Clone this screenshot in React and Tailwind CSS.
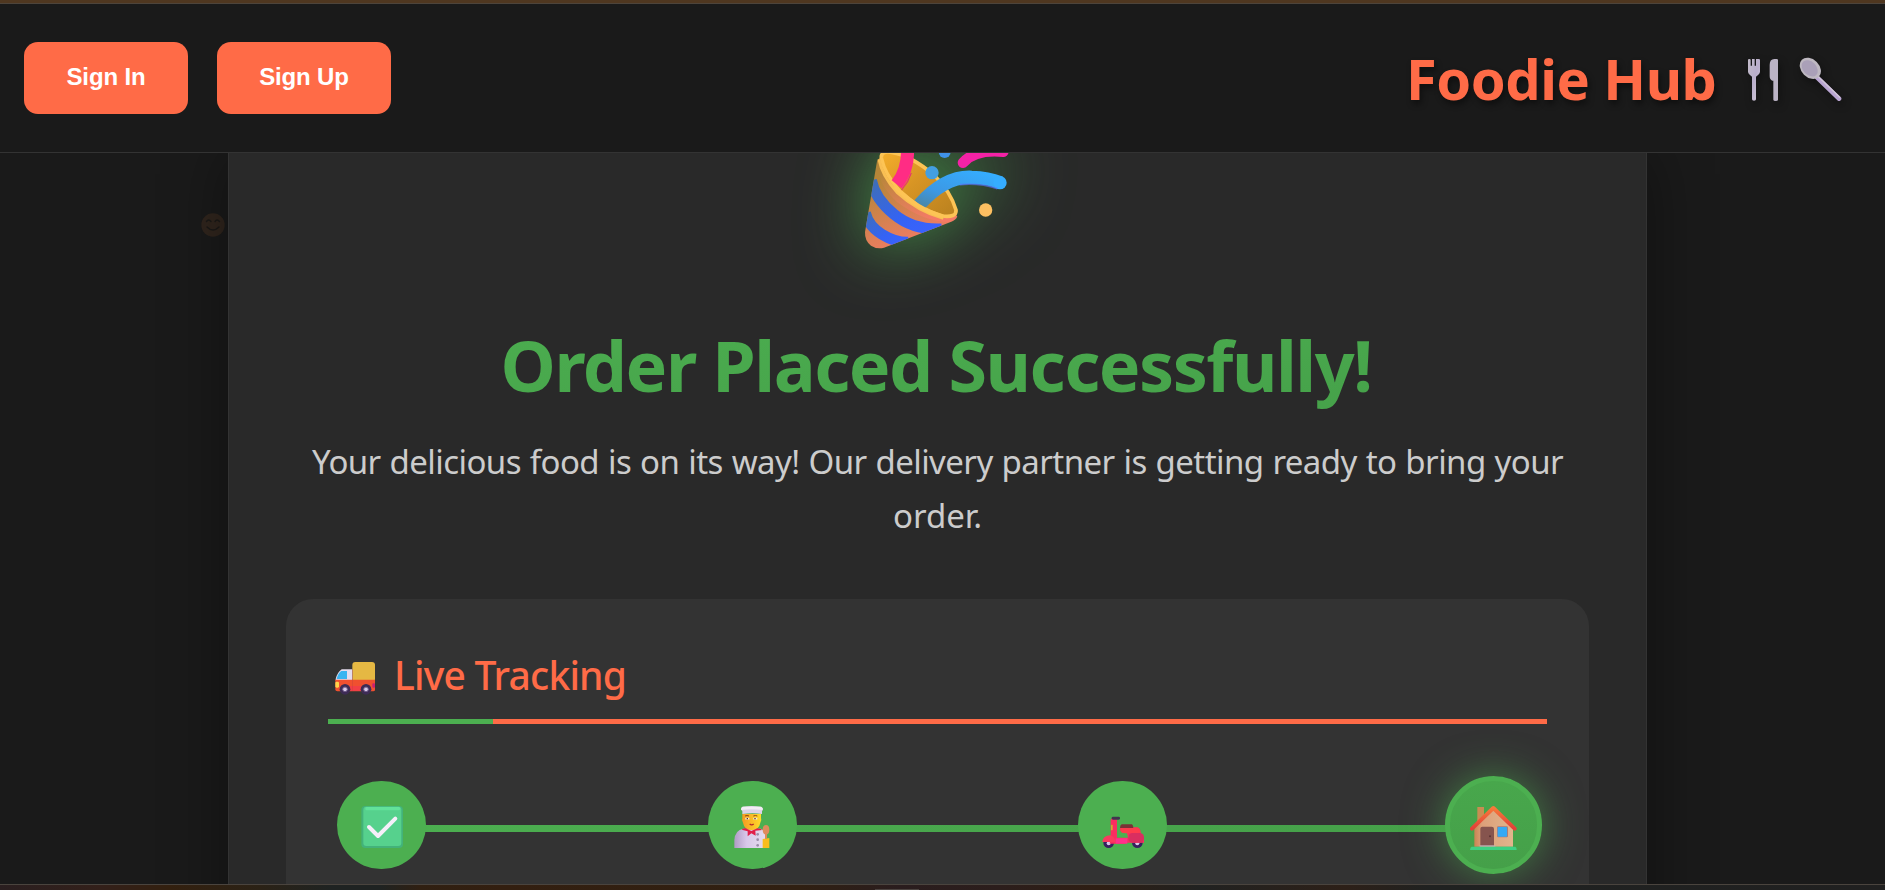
function Cutlery() {
  return (
    <svg className="h-[50px] w-[104px] [filter:drop-shadow(2px_4px_4px_rgba(0,0,0,0.4))]" viewBox="1095 165 312 150">
      <defs>
        <linearGradient id="metal" x1="0" y1="0" x2="1" y2="1">
          <stop offset="0" stopColor="#c3bcc9" />
          <stop offset="0.5" stopColor="#b9aecb" />
          <stop offset="1" stopColor="#d2cbd8" />
        </linearGradient>
      </defs>
      <path d="M1104 179q0-2 4-2t4 2v18h4v-20h8v20h4v-20h8q4 0 4 2v36q0 5-5 9l-7 6v68q0 4-6 4t-6-4v-68l-7-6q-5-4-5-9z" fill="url(#metal)" />
      <path d="M1194 180v119q0 4-7 4t-7-4v-57h-3q-8-3-8-14v-33q0-18 14-18h7q4 0 4 3z" fill="#bbb3c5" />
      <path d="M1308 229l69 67" stroke="#b9a5d2" strokeWidth="14" strokeLinecap="round" />
      <path d="M1312 227l67 65" stroke="#d0c6d7" strokeWidth="4" strokeLinecap="round" />
      <ellipse cx="1291" cy="205" rx="36" ry="27" transform="rotate(45 1291 205)" fill="#beb8c1" />
      <ellipse cx="1289" cy="205" rx="28" ry="20" transform="rotate(45 1289 205)" fill="#aaa0b8" />
    </svg>
  );
}

function PartyPopper() {
  return (
    <svg
      className="h-[97px] w-[153px] shrink-0 overflow-visible [filter:drop-shadow(0_0_33px_rgba(76,175,80,0.8))]"
      viewBox="300 69 459 291"
    >
      <defs>
        <linearGradient id="cone" x1="0.2" y1="0.2" x2="0.6" y2="1">
          <stop offset="0" stopColor="#b58638" />
          <stop offset="0.6" stopColor="#dd8056" />
          <stop offset="1" stopColor="#f57a66" />
        </linearGradient>
        <linearGradient id="inner" x1="0" y1="0" x2="1" y2="1">
          <stop offset="0" stopColor="#f5ae2b" />
          <stop offset="0.45" stopColor="#d89524" />
          <stop offset="1" stopColor="#b8801f" />
        </linearGradient>
        <linearGradient id="ribbon" x1="0" y1="1" x2="1" y2="0">
          <stop offset="0" stopColor="#4a87a8" />
          <stop offset="0.35" stopColor="#3c98e4" />
          <stop offset="1" stopColor="#35adff" />
        </linearGradient>
        <linearGradient id="stripe" x1="0" y1="0" x2="1" y2="1">
          <stop offset="0" stopColor="#3f6fb4" />
          <stop offset="0.6" stopColor="#3463f4" />
          <stop offset="1" stopColor="#3b62ff" />
        </linearGradient>
        <clipPath id="coneClip">
          <path d="M351 94Q365 155 430 205T592 258Q590 270 570 277L372 353Q352 359 333 347Q314 333 315 306z" />
        </clipPath>
      </defs>
      <path d="M351 94Q365 155 430 205T592 258Q590 270 570 277L372 353Q352 359 333 347Q314 333 315 306z" fill="url(#cone)" />
      <path d="M353 90Q375 60 420 100L592 240Q594 266 570 276Q490 275 410 215Q350 160 351 94z" fill="url(#cone)" />
      <g clipPath="url(#coneClip)" fill="none" stroke="url(#stripe)" strokeWidth="33">
        <path d="M334 150Q344 205 402 253T545 297" />
        <path d="M316 248Q325 288 366 313T445 337" />
      </g>
      <path
        d="M364 84Q374 132 418 182Q478 239 545 258Q590 264 588 240Q572 185 522 135Q450 75 395 67Q362 62 364 84z"
        fill="url(#inner)"
        stroke="#fdc455"
        strokeWidth="11"
      />
      <path d="M357 88Q366 138 411 187Q472 243 550 265" fill="none" stroke="#f9bf53" strokeWidth="9" />
      <path d="M410 163Q442 125 443 62Q440 0 400 -40" fill="none" stroke="#ff2c84" strokeWidth="39" />
      <path d="M424 181q22-24 30-52" fill="none" stroke="#e6247c" strokeWidth="3" />
      <path d="M478 224Q555 138 635 142Q685 143 720 158" fill="none" stroke="url(#ribbon)" strokeWidth="40" />
      <circle cx="720" cy="158" r="20" fill="#35adff" />
      <path d="M600 164q60-5 112 12" fill="none" stroke="#5b72fb" strokeWidth="5" opacity="0.65" />
      <path d="M404 170Q470 238 550 259" fill="none" stroke="#fdc455" strokeWidth="12" />
      <path d="M609 98Q645 57 730 65" fill="none" stroke="#f422a6" strokeWidth="32" strokeLinecap="round" />
      <circle cx="516" cy="128" r="20" fill="#439fe2" />
      <circle cx="554" cy="66" r="18" fill="#4092e8" />
      <circle cx="677" cy="240" r="20" fill="#fcbf61" />
      <path d="M560 10Q600 -10 580 -55" fill="none" stroke="#ffb938" strokeWidth="34" strokeLinecap="round" />
    </svg>
  );
}

function Truck() {
  return (
    <svg className="h-[34px] w-[42px]" viewBox="192 243 126 102">
      <rect x="247" y="246" width="68" height="60" rx="9" fill="#e5b843" />
      <path d="M215 268h32v34h-50v-5q5-20 18-29z" fill="#e4dcee" />
      <path d="M214 273h17v24h-31q4-18 14-24z" fill="#38b4f1" />
      <path d="M196 299h119v30q0 5-5 5H202q-6 0-6-6z" fill="#f0502f" />
      <path d="M236 318h64v15h-64z" fill="#f23f45" />
      <rect x="196" y="305" width="11" height="18" rx="4" fill="#ffd54a" />
      <rect x="307" y="310" width="8" height="13" rx="3" fill="#c91f72" />
      <g fill="#3d2c55">
        <circle cx="225" cy="328" r="16" />
        <circle cx="288" cy="328" r="16" />
      </g>
      <g fill="#d9cce8" stroke="#6f5a8a" strokeWidth="3">
        <circle cx="225" cy="328" r="7" />
        <circle cx="288" cy="328" r="7" />
      </g>
      <path d="M247 268v64" stroke="#b8433f" strokeWidth="2" opacity="0.6" />
    </svg>
  );
}

function CheckMark() {
  return (
    <svg className="h-[42px] w-[42px]" viewBox="272 678 126 126">
      <rect x="273" y="678" width="125" height="126" rx="12" fill="#43b27a" />
      <rect x="279" y="680" width="114" height="118" rx="9" fill="#56d18d" />
      <rect x="285" y="681" width="104" height="10" rx="4" fill="#62e29a" />
      <path d="M296 741l27 27 52-52" fill="none" stroke="#f5effa" strokeWidth="12" strokeLinecap="round" strokeLinejoin="round" />
    </svg>
  );
}

function Chef() {
  return (
    <svg className="h-[42px] w-[36px]" viewBox="164 168 108 126">
      <defs>
        <linearGradient id="coat" x1="0" y1="0" x2="1" y2="0">
          <stop offset="0" stopColor="#b09bc5" />
          <stop offset="0.4" stopColor="#d9c8ea" />
          <stop offset="1" stopColor="#e4dcee" />
        </linearGradient>
        <linearGradient id="face" x1="0" y1="0" x2="1" y2="0">
          <stop offset="0" stopColor="#f49a22" />
          <stop offset="1" stopColor="#ffdc2b" />
        </linearGradient>
      </defs>
      <path d="M165 294v-24q2-30 27-34h52q10 3 14 16v42z" fill="url(#coat)" />
      <path d="M189 192h56v12q3 8-2 14-4 22-26 22t-26-22q-5-6-2-14z" fill="url(#face)" />
      <path d="M189 192v-8q-8-10 1-14 27-4 54 0 12 4 4 14v8q-28-5-59 0z" fill="#ddd3e8" />
      <path d="M190 170h56q6 4 3 10-32-4-64 0 0-8 5-10z" fill="#f1edf3" />
      <path d="M197 198q6-3 12 0M222 198q7-3 12 0" stroke="#914414" strokeWidth="3" fill="none" />
      <path d="M198 206h12M222 206h12" stroke="#f7ecdc" strokeWidth="5" />
      <path d="M204 204v4M227 204v4" stroke="#553037" strokeWidth="4" />
      <path d="M211 222q6 5 12 0" stroke="#b1272d" strokeWidth="4" fill="none" />
      <path d="M187 239q6-5 12-4l17 8 18-8q10 0 15 5l-21 2 1 15-13-7-11 9v-15z" fill="#e11e49" />
      <g fill="#9a8ca9">
        <circle cx="235" cy="253" r="4" />
        <circle cx="235" cy="269" r="4" />
        <circle cx="235" cy="286" r="4" />
      </g>
      <path d="M250 294v-27l20-3v30z" fill="#f9bd1c" />
      <ellipse cx="260" cy="239" rx="10" ry="14" fill="#df8b5c" />
      <path d="M260 248v18" stroke="#df8b5c" strokeWidth="6" />
    </svg>
  );
}

function Scooter() {
  return (
    <svg className="h-[42px] w-[42px]" viewBox="1265 168 126 126">
      <g fill="#382060">
        <circle cx="1285" cy="278" r="16" />
        <circle cx="1371" cy="278" r="16" />
      </g>
      <g fill="#d9cce8">
        <circle cx="1285" cy="280" r="6" />
        <circle cx="1371" cy="280" r="6" />
      </g>
      <path d="M1291 262v-48q0-11 10-11h9v60h33l-3-14q-20 0-21-9 0-7 4-8h48q10 1 10 18 10 6 10 20v8h-50l-8 3h-45z" fill="#fb2d60" />
      <path d="M1266 276q2-20 24-20 12 2 16 20z" fill="#fa3b5f" />
      <path d="M1320 233h52q8 4 8 15-30 3-56 0z" fill="#ff3b4c" />
      <rect x="1344" y="249" width="47" height="29" rx="13" fill="#da2e60" />
      <path d="M1306 265h35v16h-35z" fill="#ff318c" />
      <rect x="1294" y="200" width="25" height="9" rx="4" fill="#40364e" />
      <path d="M1324 223h31q4 3 4 11h-40q0-9 5-11z" fill="#7a3236" />
      <rect x="1292" y="224" width="5" height="17" rx="2" fill="#d8a92c" />
    </svg>
  );
}

function House() {
  return (
    <svg className="h-[46px] w-[47px]" viewBox="270 197 141 138">
      <defs>
        <linearGradient id="wall" x1="0" y1="0" x2="1" y2="0">
          <stop offset="0" stopColor="#c98452" />
          <stop offset="0.2" stopColor="#dda07a" />
          <stop offset="1" stopColor="#e2b58c" />
        </linearGradient>
        <linearGradient id="roof" x1="0" y1="0" x2="0" y2="1">
          <stop offset="0" stopColor="#f7793a" />
          <stop offset="1" stopColor="#e23f38" />
        </linearGradient>
      </defs>
      <path d="M292 203h20v36l-20 16z" fill="#c98d52" />
      <path d="M283 260l57-52 59 54v60H283z" fill="url(#wall)" />
      <path d="M276 268l64-62 64 62" fill="none" stroke="url(#roof)" strokeWidth="12" strokeLinecap="round" strokeLinejoin="round" />
      <path d="M301 320v-52q0-6 6-6h28q7 0 7 6v52z" fill="#86544e" />
      <circle cx="330" cy="291" r="3" fill="#5c3433" />
      <rect x="351" y="261" width="33" height="33" rx="4" fill="#a97b7b" />
      <rect x="353" y="263" width="28" height="29" rx="2" fill="#35a9f5" />
      <path d="M299 318h47v4h-47z" fill="#c4b4bb" />
      <path d="M275 322h131q4 1 4 10H270q1-9 5-10z" fill="#3ed082" />
    </svg>
  );
}

function Smiley() {
  return (
    <svg className="h-6 w-6" viewBox="0 0 24 24">
      <circle cx="12" cy="12" r="11.7" fill="#30251d" />
      <path d="M5.500 8.500q2-3 4.500 0M14 8.500q2-3 4.500 0M6 14q6 6 12 0" fill="none" stroke="#1b1917" strokeWidth="1.400" strokeLinecap="round" />
    </svg>
  );
}

function Step({ children }) {
  return (
    <div className="z-10 flex h-[88px] w-[89px] items-center justify-center rounded-full bg-[#4caf50] pt-[3px]">
      {children}
    </div>
  );
}

export default function App() {
  return (
    <div className="flex h-[890px] w-[1885px] flex-col overflow-hidden bg-[#1a1a1a] font-['Noto_Sans',sans-serif]">
      <div className="h-[3px] shrink-0 bg-[#4f3720]" />
      <header className="z-20 flex h-[150px] shrink-0 items-start justify-between border-t border-b border-t-[#4d443b] border-b-[#333333] bg-[#1a1a1a] pr-[36px] pl-6">
        <div className="flex gap-[29px] pt-[38px] font-['Liberation_Sans',sans-serif] text-2xl font-bold tracking-[-0.15px] text-white">
          <button className="h-[72px] w-[164px] rounded-[14px] bg-[#ff6b47] pb-0.5">Sign In</button>
          <button className="h-[72px] w-[174px] rounded-[14px] bg-[#ff6b47] pb-0.5">Sign Up</button>
        </div>
        <div className="flex items-start pt-[41px]">
          <h1 className="-mt-[2px] mr-[31px] w-[308px] whitespace-nowrap text-[56px] leading-[70px] font-bold tracking-[-0.5px] text-[#ff6b47] [text-shadow:2px_4px_6px_rgba(0,0,0,0.45)]">
            Foodie Hub
          </h1>
          <div className="pt-[10px]">
            <Cutlery />
          </div>
        </div>
      </header>

      <main className="flex h-[731px] shrink-0 overflow-hidden">
        <div className="flex w-[228px] shrink-0 justify-end pt-[60px] pr-[3px]">
          <Smiley />
        </div>
        <section className="flex h-[900px] w-[1419px] shrink-0 flex-col border-x border-[#333333] bg-[#292929] px-[57px] shadow-[0_0_60px_rgba(0,0,0,0.4)]">
          <div className="pl-[574px]">
            <PartyPopper />
          </div>
          <h2 className="mt-[65px] mb-[2px] bg-gradient-to-br from-[#4caf50] to-[#45a049] bg-clip-text pr-[3px] text-center text-[70px] leading-[100px] font-bold tracking-[-1.5px] whitespace-nowrap text-transparent">
            Order Placed Successfully!
          </h2>
          <p className="mt-[18px] mb-px text-center text-[33px] leading-[54px] tracking-[-0.57px] whitespace-nowrap text-[#cccccc] [word-spacing:0.9px]">
            Your delicious food is on its way! Our delivery partner is getting ready to bring your
            <br />
            <span className="tracking-normal">order.</span>
          </p>

          <div className="mt-[55px] h-[400px] rounded-[27px] bg-[#333333] px-[42px] pt-[51px]">
            <h3 className="flex h-[69px] items-start text-[39px] leading-[50px] font-medium tracking-[-0.8px] text-[#ff6b47]">
              <span className="mt-[11px] ml-[6px]">
                <Truck />
              </span>
              <span className="ml-[18px] whitespace-nowrap">Live Tracking</span>
            </h3>
            <div className="h-[5px] bg-[#ff6b47]">
              <div className="h-full w-[165px] bg-[#4caf50]" />
            </div>
            <div className="relative mt-[52px] flex h-[98px] items-center justify-between px-[9px]">
              <div className="absolute top-[49px] right-[54px] left-[54px] h-[7px] bg-gradient-to-r from-[#4caf50] to-[#45a049]" />
              <Step><CheckMark /></Step>
              <Step><Chef /></Step>
              <Step><Scooter /></Step>
              <div className="z-10 -mx-[4px] flex h-[98px] w-[97px] items-center justify-center rounded-full border-[5px] border-[#4caf50] bg-gradient-to-b from-[#48a74c] to-[#45a049] pt-[6px] shadow-[0_0_40px_rgba(76,175,80,0.6)]">
                <House />
              </div>
            </div>
          </div>
        </section>
      </main>

      <footer className="z-20 flex h-[6px] shrink-0 items-end border-t border-[#4a443e] bg-[linear-gradient(90deg,#2a1f20_0,#33201a_100px,#33200f_170px,#2b2216_260px,#1f2322_330px,#1f2322_380px,#302012_420px,#331f10_500px,#302012_800px,#2a1d1e_900px,#2c1e1c_1000px,#2f1f14_1100px,#212221_1200px,#2d2018_1345px,#202221_1430px,#202020_1885px)] pl-[875px]">
        <div className="h-px w-[44px] bg-[#4b4340]" />
      </footer>
    </div>
  );
}
